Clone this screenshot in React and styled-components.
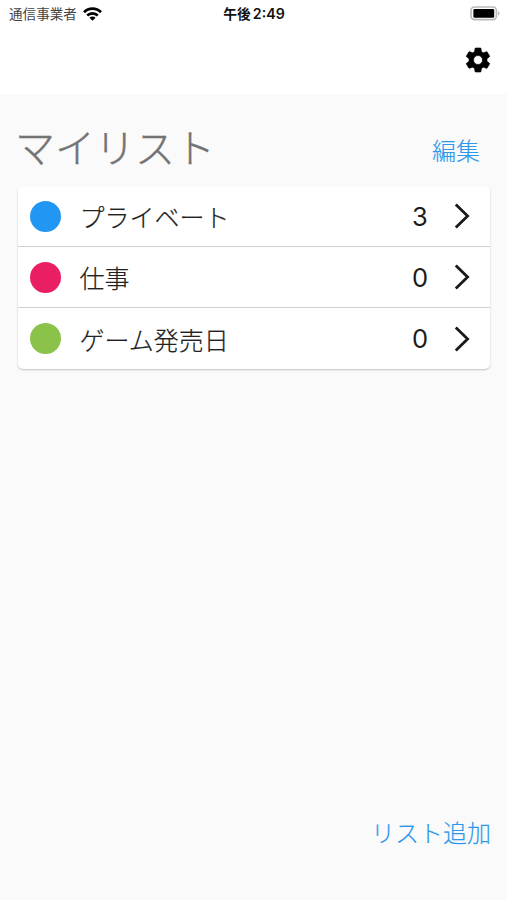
import React from "react";
import styled, { createGlobalStyle } from "styled-components";

const GlobalStyle = createGlobalStyle`
  * { box-sizing: border-box; }
  body {
    margin: 0;
    background: #fafafa;
    font-family: Inter, "Noto Sans CJK JP", sans-serif;
    -webkit-font-smoothing: antialiased;
  }
`;

const Screen = styled.div`
  width: 100%;
  height: 100vh;
  display: flex;
  flex-direction: column;
  overflow: hidden;
  background: #fafafa;
`;

const Header = styled.header`
  height: 94px;
  flex: none;
  background: #fff;
`;

const StatusBar = styled.div`
  height: 27px;
  display: grid;
  grid-template-columns: 1fr auto 1fr;
  align-items: center;
  padding: 0 6px 0 9px;
`;

const Carrier = styled.div`
  display: flex;
  align-items: center;
  gap: 6px;
  font-size: 13.6px;
  line-height: 20px;
  color: #444;
`;

const Clock = styled.time`
  display: flex;
  gap: 2px;
  margin-right: 2px;
  font-size: 14.2px;
  font-weight: 600;
  line-height: 20px;
  color: #111;
`;

const ClockPeriod = styled.span`
  font-size: 13.8px;
  font-weight: 700;
`;

const BatterySlot = styled.div`
  display: flex;
  justify-content: flex-end;
`;

const Toolbar = styled.div`
  height: 66px;
  display: flex;
  justify-content: flex-end;
  align-items: center;
  padding-right: 14px;
`;

const IconButton = styled.button`
  display: flex;
  padding: 0;
  border: 0;
  background: none;
  color: #000;
`;

const TitleRow = styled.div`
  height: 92px;
  flex: none;
  display: flex;
  justify-content: space-between;
  align-items: flex-start;
  padding: 27px 27px 0 15px;
`;

const Title = styled.h1`
  margin: 0;
  font-size: 40px;
  font-weight: 300;
  line-height: 56px;
  color: #737373;
  -webkit-text-stroke: 0.4px currentColor;
`;

const TextButton = styled.button`
  padding: 0;
  border: 0;
  background: none;
  font-family: inherit;
  font-size: 24px;
  font-weight: 300;
  line-height: 34px;
  color: #2b98ec;
  -webkit-text-stroke: 0.15px currentColor;
`;

const EditButton = styled(TextButton)`
  margin-top: 14px;
`;

const Card = styled.ul`
  flex: none;
  margin: 0 17px 0 18px;
  padding: 0;
  list-style: none;
  border-radius: 5px;
  background: #fff;
  box-shadow: 0 1px 2px rgba(0, 0, 0, 0.22);
`;

const Row = styled.li`
  height: 61px;
  display: flex;
  align-items: center;
  padding: 0 20px 0 12px;

  & + & {
    border-top: 1px solid #cfcfcf;
  }

  &:first-child {
    height: 60px;
  }

  &:last-child {
    height: 62px;
  }
`;

const Dot = styled.span`
  width: 31px;
  height: 31px;
  border-radius: 50%;
  background: ${({ $color }) => $color};
`;

const Name = styled.span`
  flex: 1;
  margin-left: 18.5px;
  font-size: 25px;
  font-weight: 300;
  line-height: 36px;
  padding-top: 4px;
  color: #222;
  -webkit-text-stroke: 0.2px currentColor;
`;

const Count = styled.span`
  width: 18px;
  margin-right: 25px;
  text-align: center;
  font-size: 25.5px;
  font-weight: 400;
  color: #1c1c1c;
`;

const Footer = styled.footer`
  margin-top: auto;
  display: flex;
  justify-content: flex-end;
  padding: 0 16px 49px 0;
`;

const Wifi = () => (
  <svg width="19" height="14" viewBox="0 0 19 14">
    <g fill="none" stroke="#000" strokeWidth="2.7">
      <path d="M1 5.2C5.7 .5 13.3 .5 18 5.2" />
      <path d="M4.2 8.5C7.2 5.6 11.8 5.6 14.8 8.5" />
    </g>
    <path d="M6.4 10.7C8.2 9.1 10.8 9.1 12.6 10.7L9.5 13.8Z" />
  </svg>
);

const Battery = () => (
  <svg width="31" height="15" viewBox="0 0 31 15">
    <rect x="1" y="1" width="25.4" height="12.6" rx="3.5" fill="#fff" stroke="#b9b9b9" strokeWidth="1.6" />
    <rect x="3.4" y="2.9" width="20.8" height="8.8" rx="1.2" />
    <path d="M28.2 5Q30.8 7.3 28.2 9.6Z" fill="#aaa" />
  </svg>
);

const Gear = () => (
  <svg width="30" height="30" viewBox="0 0 24 24" fill="currentColor">
    <path d="M19.14 12.94c.04-.3.06-.61.06-.94 0-.32-.02-.64-.07-.94l2.03-1.58c.18-.14.23-.41.12-.61l-1.92-3.32c-.12-.22-.37-.29-.59-.22l-2.39.96c-.5-.38-1.03-.7-1.62-.94l-.36-2.54c-.04-.24-.24-.41-.48-.41h-3.84c-.24 0-.43.17-.47.41l-.36 2.54c-.59.24-1.13.57-1.62.94l-2.39-.96c-.22-.08-.47 0-.59.22L2.74 8.87c-.12.21-.08.47.12.61l2.03 1.58c-.05.3-.09.63-.09.94s.02.64.07.94l-2.03 1.58c-.18.14-.23.41-.12.61l1.92 3.32c.12.22.37.29.59.22l2.39-.96c.5.38 1.03.7 1.62.94l.36 2.54c.05.24.24.41.48.41h3.84c.24 0 .44-.17.47-.41l.36-2.54c.59-.24 1.13-.56 1.62-.94l2.39.96c.22.08.47 0 .59-.22l1.92-3.32c.12-.22.07-.47-.12-.61l-2.01-1.58zM12 15.6c-1.98 0-3.6-1.62-3.6-3.6s1.62-3.6 3.6-3.6 3.6 1.62 3.6 3.6-1.62 3.6-3.6 3.6z" stroke="currentColor" strokeWidth="0.5" />
  </svg>
);

const Chevron = () => (
  <svg width="16" height="26" viewBox="0 0 16 26">
    <path d="M1.8 1.6L13.6 13L1.8 24.4" fill="none" stroke="#1a1a1a" strokeWidth="2.8" />
  </svg>
);

const lists = [
  { name: "プライベート", count: 3, color: "#2196f3" },
  { name: "仕事", count: 0, color: "#e91e63" },
  { name: "ゲーム発売日", count: 0, color: "#8bc34a" },
];

export default function App() {
  return (
    <Screen lang="ja">
      <GlobalStyle />
      <Header>
        <StatusBar>
          <Carrier>
            通信事業者
            <Wifi />
          </Carrier>
          <Clock>
            <ClockPeriod>午後</ClockPeriod>2:49
          </Clock>
          <BatterySlot>
            <Battery />
          </BatterySlot>
        </StatusBar>
        <Toolbar>
          <IconButton aria-label="設定">
            <Gear />
          </IconButton>
        </Toolbar>
      </Header>
      <TitleRow>
        <Title>マイリスト</Title>
        <EditButton>編集</EditButton>
      </TitleRow>
      <Card>
        {lists.map((list) => (
          <Row key={list.name}>
            <Dot $color={list.color} />
            <Name>{list.name}</Name>
            <Count>{list.count}</Count>
            <Chevron />
          </Row>
        ))}
      </Card>
      <Footer>
        <TextButton>リスト追加</TextButton>
      </Footer>
    </Screen>
  );
}
